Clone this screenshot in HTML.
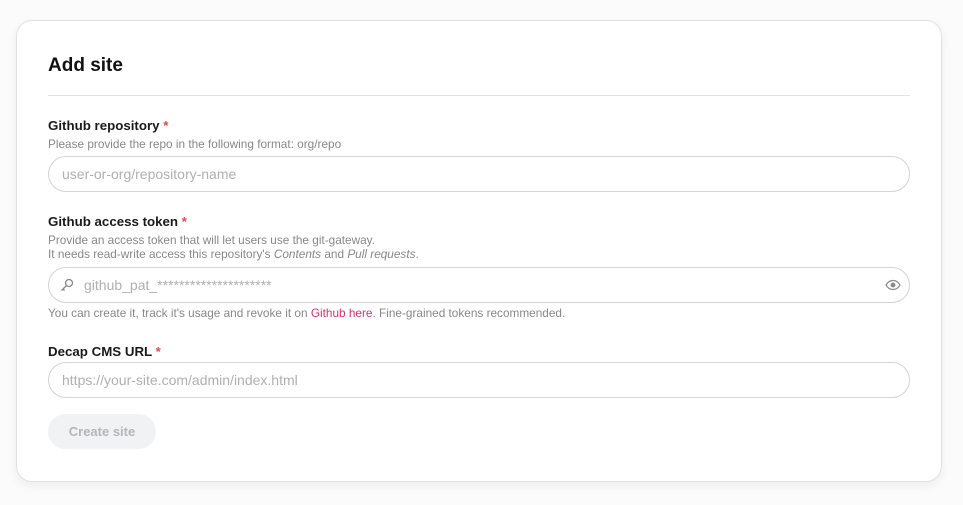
<!DOCTYPE html>
<html><head><style>
body{margin:0;width:963px;height:505px;background:#fbfbfb;font-family:"Liberation Sans",sans-serif;position:relative;overflow:hidden}
.card{position:absolute;left:16px;top:20px;width:924px;height:460px;background:#fff;border:1px solid #e2e2e2;border-radius:16px;box-shadow:0 4px 10px rgba(0,0,0,0.06)}
.a{position:absolute;white-space:nowrap}
h1{position:absolute;left:31px;top:34px;margin:0;font-size:19px;font-weight:bold;color:#111}
.hr{position:absolute;left:31px;top:74px;width:862px;height:1px;background:#e3e3e3}
.lbl{font-size:13.3px;font-weight:bold;color:#1a1a1a;left:31px}
.lbl span{color:#e5484d}
.help{font-size:11.8px;color:#888;left:31px;line-height:14px}
.in{position:absolute;left:31px;width:860px;height:34px;border:1px solid #d4d4d4;border-radius:18px;font-size:14px;color:#b0b0b0;line-height:34px;box-sizing:content-box}
.btn{position:absolute;left:31px;top:393px;width:108px;height:35px;border-radius:18px;background:#f1f2f3;color:#b3b6ba;font-size:13px;font-weight:bold;text-align:center;line-height:35px}
</style></head><body>
<div class="card">
<h1>Add site</h1>
<div class="hr"></div>
<div class="a lbl" style="top:97px">Github repository <span>*</span></div>
<div class="a help" style="top:116px">Please provide the repo in the following format: org/repo</div>
<div class="in" style="top:135px"><span style="margin-left:13px">user-or-org/repository-name</span></div>
<div class="a lbl" style="top:193px">Github access token <span>*</span></div>
<div class="a help" style="top:212px">Provide an access token that will let users use the git-gateway.<br>It needs read-write access this repository's <i>Contents</i> and <i>Pull requests</i>.</div>
<div class="in" style="top:246px">
<svg style="position:absolute;left:10px;top:9px" width="16" height="16" viewBox="0 0 16 16" fill="none" stroke="#888" stroke-width="1.3"><circle cx="10" cy="6" r="3.5"/><path d="M7.5 8.5L2.5 13.5M4 12l1.5 1.5"/></svg>
<span style="margin-left:35px">github_pat_*********************</span>
<svg style="position:absolute;right:8px;top:10px" width="16" height="14" viewBox="0 0 16 14" fill="none" stroke="#888" stroke-width="1.2"><path d="M1 7C3 3.5 5.5 2.5 8 2.5S13 3.5 15 7C13 10.5 10.5 11.5 8 11.5S3 10.5 1 7Z"/><circle cx="8" cy="7" r="1.8" fill="#888"/></svg>
</div>
<div class="a help" style="top:285px">You can create it, track it's usage and revoke it on <span style="color:#d6336c">Github here</span>. Fine-grained tokens recommended.</div>
<div class="a lbl" style="top:323px">Decap CMS URL <span>*</span></div>
<div class="in" style="top:341px"><span style="margin-left:13px">https://your-site.com/admin/index.html</span></div>
<div class="btn">Create site</div>
</div>
</body></html>
